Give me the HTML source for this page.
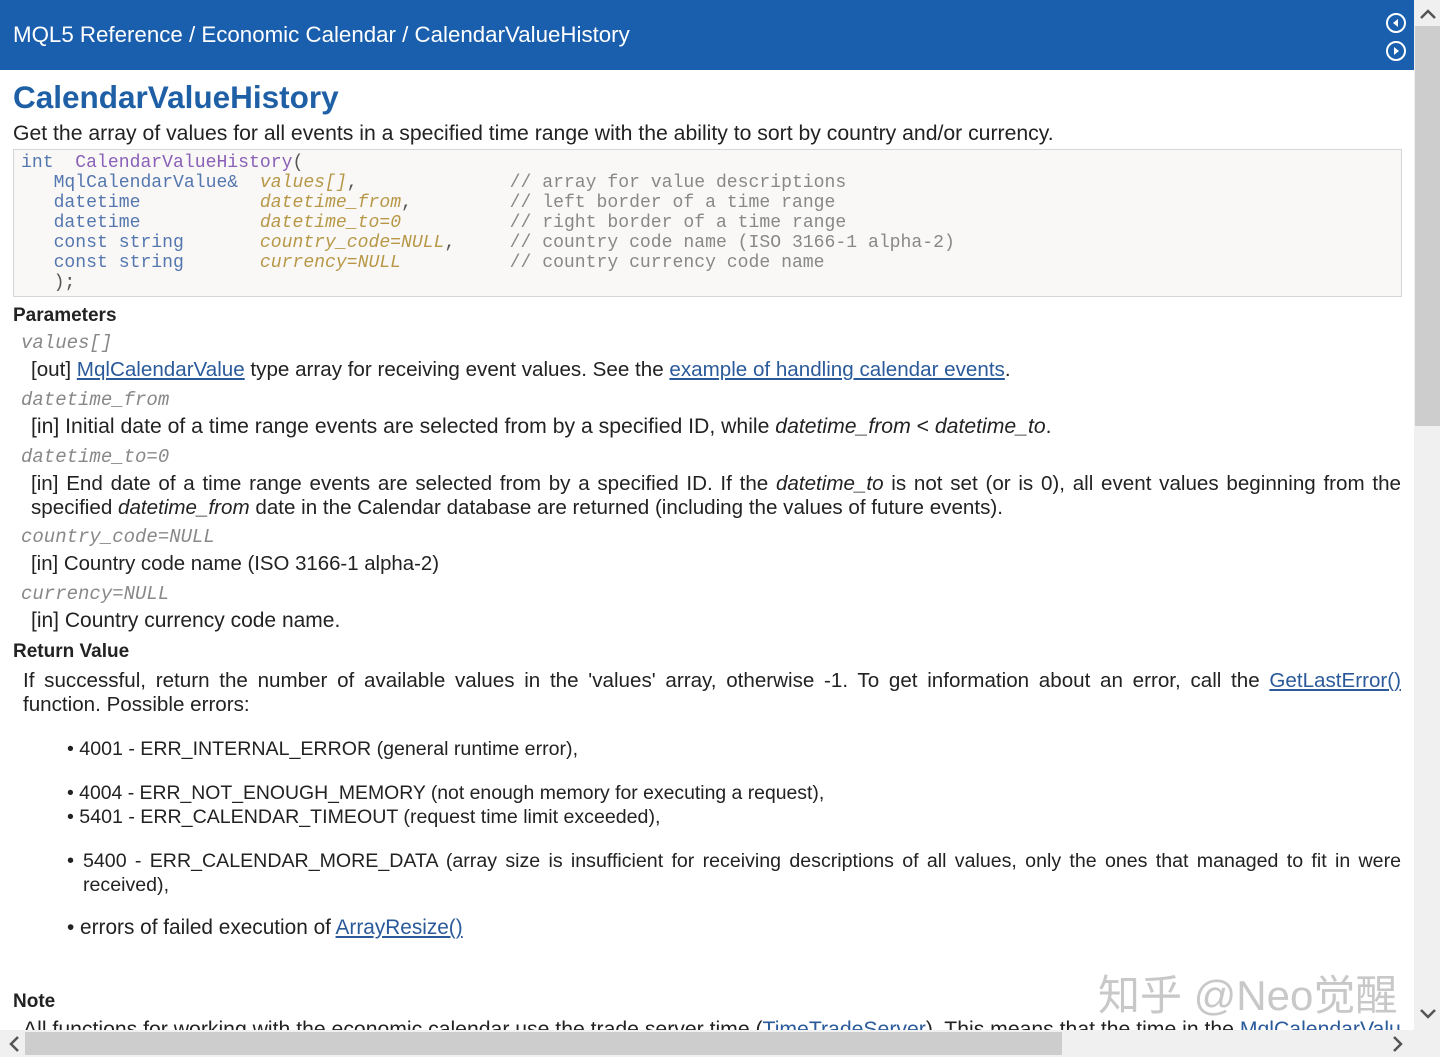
<!DOCTYPE html>
<html><head><meta charset="utf-8"><style>
body{margin:0;width:1440px;height:1057px;overflow:hidden;background:#fff;font-family:"Liberation Sans","DejaVu Sans",sans-serif;color:#222;position:relative}
.a{position:absolute;white-space:nowrap;line-height:24px;font-size:20px}
.hd{position:absolute;left:0;top:0;width:1414px;height:70px;background:#195fae}
.m{font-family:"Liberation Mono",monospace;font-size:18.1px;line-height:20px;position:absolute;white-space:pre;color:#555}
.pm{font-family:"Liberation Mono",monospace;font-style:italic;color:#888;font-size:19px}
a{color:#2a5a9a;text-decoration:underline}
.j{text-align:justify;white-space:normal;text-align-last:left}
.k{color:#5577b0}.f{color:#8a60b8}.p{color:#b89848;font-style:italic}.c{color:#888}
</style></head><body>
<div class="hd"></div>
<div class="a" style="left:13px;top:22px;color:#fff;font-size:22.3px;line-height:26px">MQL5 Reference / Economic Calendar / CalendarValueHistory</div>
<svg style="position:absolute;left:1385px;top:11px" width="24" height="52"><circle cx="11" cy="12" r="9" fill="none" stroke="#fff" stroke-width="2"/><path d="M13 8 L8 12 L13 16Z" fill="#fff"/><circle cx="11" cy="40" r="9" fill="none" stroke="#fff" stroke-width="2"/><path d="M9 36 L14 40 L9 44Z" fill="#fff"/></svg>
<div class="a" style="left:13px;top:77px;font-size:31.5px;line-height:40px;font-weight:bold;color:#1e5fa6">CalendarValueHistory</div>
<div class="a" style="left:13px;top:122px;font-size:21.2px">Get the array of values for all events in a specified time range with the ability to sort by country and/or currency.</div>
<div style="position:absolute;left:13px;top:149px;width:1387px;height:146px;background:#f9f8f6;border:1px solid #d6d6d6"></div>
<div class="m" style="left:21px;top:153px"><span class="k">int</span>  <span class="f">CalendarValueHistory</span>(
   <span class="k">MqlCalendarValue&amp;</span>  <span class="p">values[]</span>,              <span class="c">// array for value descriptions</span>
   <span class="k">datetime</span>           <span class="p">datetime_from</span>,         <span class="c">// left border of a time range</span>
   <span class="k">datetime</span>           <span class="p">datetime_to=0</span>          <span class="c">// right border of a time range</span>
   <span class="k">const string</span>       <span class="p">country_code=NULL</span>,     <span class="c">// country code name (ISO 3166-1 alpha-2)</span>
   <span class="k">const string</span>       <span class="p">currency=NULL</span>          <span class="c">// country currency code name</span>
   );</div>
<div class="a" style="left:13px;top:304px;font-size:19px;font-weight:bold">Parameters</div>
<div class="a pm" style="left:21px;top:331px">values[]</div>
<div class="a" style="left:31px;top:358px;font-size:20.6px">[out] <a>MqlCalendarValue</a> type array for receiving event values. See the <a>example of handling calendar events</a>.</div>
<div class="a pm" style="left:21px;top:388px">datetime_from</div>
<div class="a" style="left:31px;top:415px;font-size:21.2px">[in]  Initial date of a time range events are selected from by a specified ID, while <i>datetime_from</i> &lt; <i>datetime_to</i>.</div>
<div class="a pm" style="left:21px;top:445px">datetime_to=0</div>
<div class="a j" style="left:31px;top:472px;width:1370px;font-size:20.6px">[in]  End date of a time range events are selected from by a specified ID. If the <i>datetime_to</i> is not set (or is 0), all event values beginning from the specified <i>datetime_from</i> date in the Calendar database are returned (including the values of future events).</div>
<div class="a pm" style="left:21px;top:525px">country_code=NULL</div>
<div class="a" style="left:31px;top:552px;font-size:20.4px">[in]  Country code name (ISO 3166-1 alpha-2)</div>
<div class="a pm" style="left:21px;top:582px">currency=NULL</div>
<div class="a" style="left:31px;top:609px;font-size:21px">[in]  Country currency code name.</div>
<div class="a" style="left:13px;top:640px;font-size:19px;font-weight:bold">Return Value</div>
<div class="a" style="left:23px;top:669px;width:1378px;font-size:20.6px;white-space:normal;text-align:justify;text-align-last:justify;height:24px">If successful, return the number of available values in the 'values' array, otherwise -1. To get information about an error, call the <a>GetLastError()</a></div>
<div class="a" style="left:23px;top:693px;font-size:20.6px">function. Possible errors:</div>
<div class="a" style="left:67px;top:737px;font-size:19.6px">• 4001 - ERR_INTERNAL_ERROR  (general runtime error),</div>
<div class="a" style="left:67px;top:781px;font-size:19.4px">• 4004 - ERR_NOT_ENOUGH_MEMORY (not enough memory for executing a request),</div>
<div class="a" style="left:67px;top:805px;font-size:19.6px">• 5401 - ERR_CALENDAR_TIMEOUT (request time limit exceeded),</div>
<div class="a" style="left:67px;top:849px">•</div>
<div class="a j" style="left:83px;top:849px;width:1318px;font-size:19.6px">5400 - ERR_CALENDAR_MORE_DATA (array size is insufficient for receiving descriptions of all values, only the ones that managed to fit in were received),</div>
<div class="a" style="left:67px;top:916px;font-size:20.8px">• errors of failed execution of <a>ArrayResize()</a></div>
<div class="a" style="left:13px;top:990px;font-size:19px;font-weight:bold">Note</div>
<div class="a" style="left:23px;top:1018px;width:1378px;overflow:hidden;font-size:21.2px">All functions for working with the economic calendar use the trade server time (<a>TimeTradeServer</a>). This means that the time in the <a>MqlCalendarValue</a></div>
<div class="a" style="left:1098px;top:972px;font-size:42px;line-height:48px;color:#c8c8c8;font-family:'Liberation Sans','Noto Sans CJK SC',sans-serif">知乎 @Neo觉醒</div>
<div style="position:absolute;left:1414px;top:0;width:26px;height:1030px;background:#f0f0f0"></div>
<div style="position:absolute;left:1415px;top:26px;width:25px;height:400px;background:#cdcdcd"></div>
<svg style="position:absolute;left:1419px;top:8px" width="18" height="12"><path d="M2 10 L9 3 L16 10" fill="none" stroke="#555" stroke-width="2.5"/></svg>
<svg style="position:absolute;left:1419px;top:1008px" width="18" height="12"><path d="M2 2 L9 9 L16 2" fill="none" stroke="#555" stroke-width="2.5"/></svg>
<div style="position:absolute;left:0;top:1030px;width:1440px;height:27px;background:#f0f0f0"></div>
<div style="position:absolute;left:25px;top:1032px;width:1037px;height:23px;background:#cdcdcd"></div>
<svg style="position:absolute;left:8px;top:1035px" width="12" height="18"><path d="M10 2 L3 9 L10 16" fill="none" stroke="#555" stroke-width="2.5"/></svg>
<svg style="position:absolute;left:1392px;top:1035px" width="12" height="18"><path d="M2 2 L9 9 L2 16" fill="none" stroke="#555" stroke-width="2.5"/></svg>
</body></html>
